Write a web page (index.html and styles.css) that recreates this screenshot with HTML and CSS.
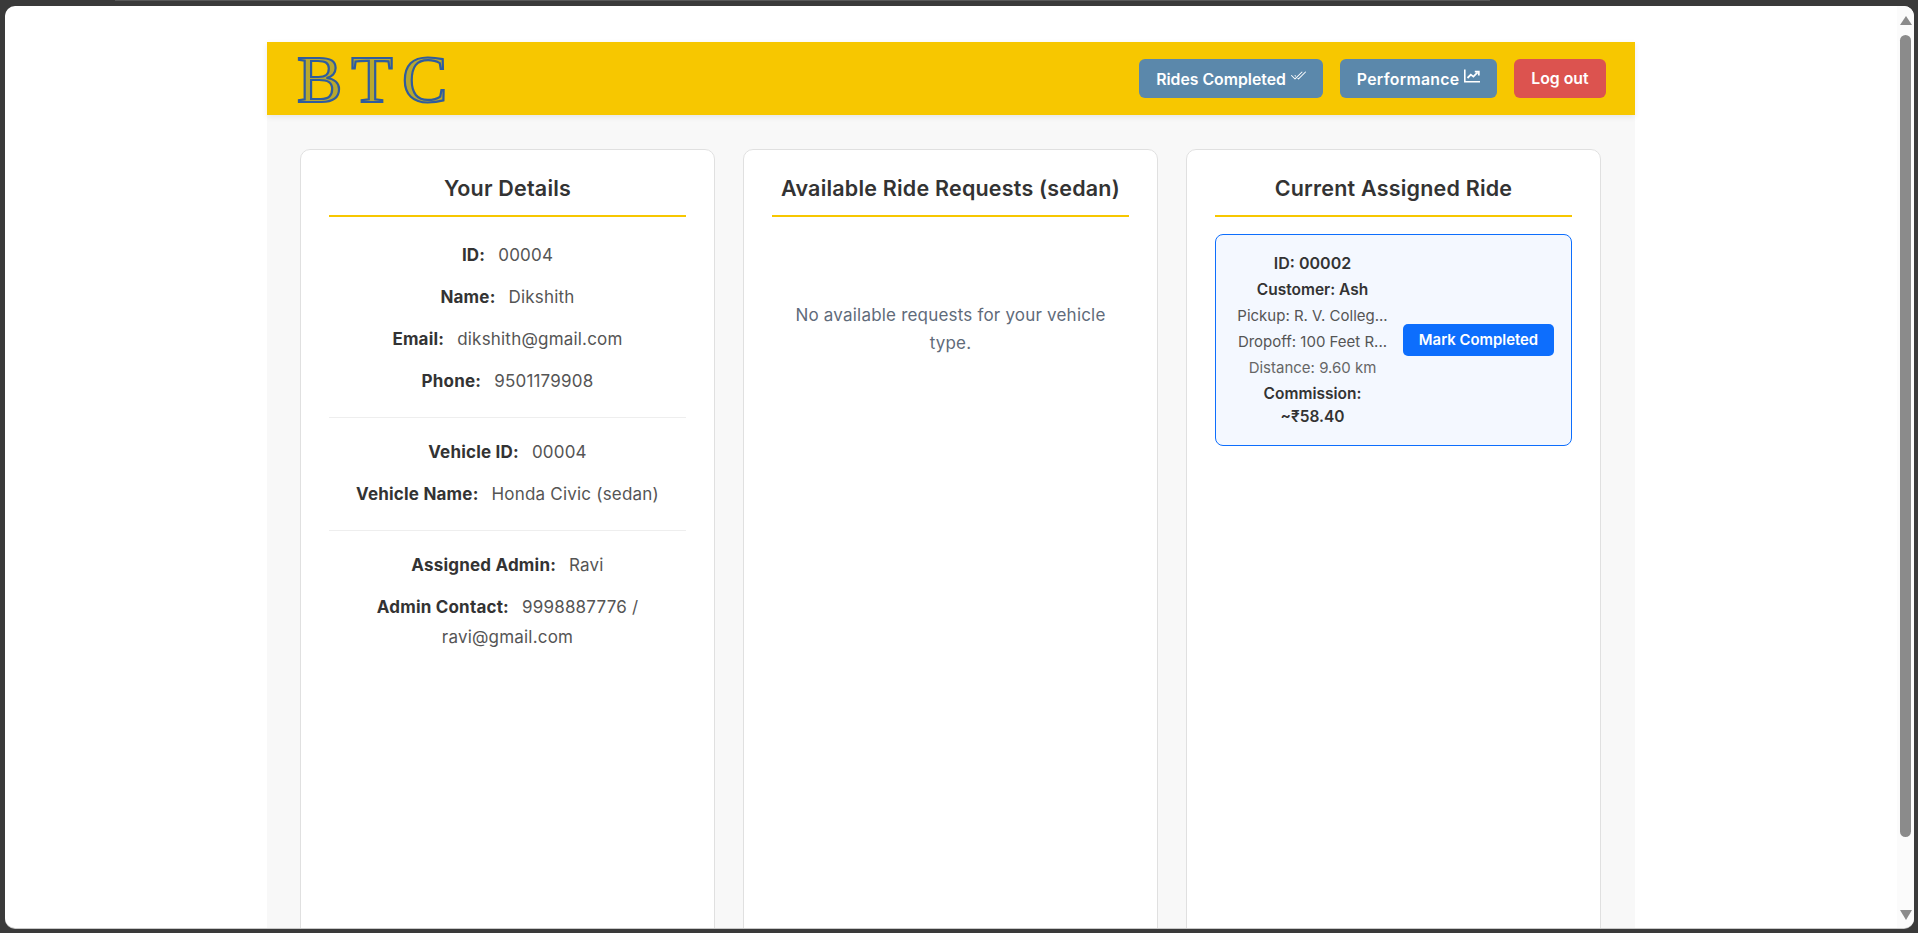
FILE: index.html
```html
<!DOCTYPE html>
<html lang="en">
<head>
    <meta charset="UTF-8">
    <meta name="viewport" content="width=device-width, initial-scale=1.0">
    <title>BTC Driver Dashboard</title>
    <link rel="stylesheet" href="styles.css">
</head>
<body>
    <div class="window">
        <div class="page">
            <div class="container">
                <header class="topbar">
                    <div class="logo">BTC</div>
                    <nav class="topbar-actions">
                        <button class="btn btn-nav">Rides Completed
                            <svg class="btn-icon" viewBox="0 0 16 16" fill="currentColor"><path d="M12.354 4.354a.5.5 0 0 0-.708-.708L5 10.293 1.854 7.146a.5.5 0 1 0-.708.708l3.5 3.5a.5.5 0 0 0 .708 0l7-7zm-4.208 7-.896-.897.707-.707.543.543 6.646-6.647a.5.5 0 0 1 .708.708l-7 7a.5.5 0 0 1-.708 0z"/><path d="m5.354 7.146.896.897-.707.707-.897-.896a.5.5 0 1 1 .708-.708z"/></svg>
                        </button>
                        <button class="btn btn-nav btn-performance">Performance
                            <svg class="btn-icon" viewBox="0 0 16 16" fill="none" stroke="currentColor" stroke-width="1.6"><path d="M.8 1.5V13.7H16"/><path d="M3.5 10 6.8 6.6l2.6 2L13.6 4.4" stroke-width="1.8"/><path d="M10.8 3.6h4v3.8" stroke-width="1.8"/></svg>
                        </button>
                        <button class="btn btn-logout">Log out</button>
                    </nav>
                </header>

                <main class="columns">
                    <section class="card">
                        <h2 class="card-title">Your Details</h2>
                        <div class="detail-group">
                            <p class="detail"><strong>ID:</strong> <span>00004</span></p>
                            <p class="detail"><strong>Name:</strong> <span>Dikshith</span></p>
                            <p class="detail"><strong>Email:</strong> <span>dikshith@gmail.com</span></p>
                            <p class="detail"><strong>Phone:</strong> <span>9501179908</span></p>
                        </div>
                        <div class="detail-group">
                            <p class="detail"><strong>Vehicle ID:</strong> <span>00004</span></p>
                            <p class="detail"><strong>Vehicle Name:</strong> <span>Honda Civic (sedan)</span></p>
                        </div>
                        <div class="detail-group">
                            <p class="detail"><strong>Assigned Admin:</strong> <span>Ravi</span></p>
                            <p class="detail"><strong>Admin Contact:</strong> <span>9998887776 /</span> <span class="detail-wrap">ravi@gmail.com</span></p>
                        </div>
                    </section>

                    <section class="card">
                        <h2 class="card-title">Available Ride Requests (sedan)</h2>
                        <p class="empty">No available requests for your vehicle type.</p>
                    </section>

                    <section class="card">
                        <h2 class="card-title">Current Assigned Ride</h2>
                        <div class="ride">
                            <div class="ride-info">
                                <p class="ride-id">ID: 00002</p>
                                <p class="ride-strong">Customer: Ash</p>
                                <p class="ride-line">Pickup: R. V. Colleg...</p>
                                <p class="ride-line">Dropoff: 100 Feet R...</p>
                                <p class="ride-line ride-muted">Distance: 9.60 km</p>
                                <p class="ride-strong ride-fare">Commission:<br>~₹58.40</p>
                            </div>
                            <button class="btn btn-complete">Mark Completed</button>
                        </div>
                    </section>
                </main>
            </div>
        </div>
        <div class="scrollbar">
            <span class="arrow-up"></span>
            <span class="thumb"></span>
            <span class="arrow-down"></span>
        </div>
    </div>
</body>
</html>
```

FILE: styles.css
```css
* {
    box-sizing: border-box;
}

html, body {
    height: 100%;
}

body {
    margin: 0;
    padding: 6px 4px 5px 5px;
    overflow: hidden;
    background-color: #3a3a3a;
    font-family: Inter, "Liberation Sans", sans-serif;
    font-size: 17px;
    letter-spacing: 0.2px;
    color: #333;
}

/* Thin strip of the desktop behind the window */
body::before {
    content: "";
    position: absolute;
    top: 0;
    left: 115px;
    width: 1375px;
    height: 1px;
    background-color: #585858;
}

/* Browser window */
.window {
    display: flex;
    height: 100%;
    background-color: #fff;
    border-radius: 10px;
    box-shadow: 0 1px 0 #c8c8c8;
    overflow: hidden;
}

.page {
    flex: 1;
    min-width: 0;
    overflow: hidden;
}

.scrollbar {
    width: 17px;
    display: flex;
    flex-direction: column;
    align-items: center;
    padding: 10px 0 8px;
    background-color: #fbfbfb;
}

.thumb {
    flex: 1;
    width: 11px;
    margin: 10px 0 73px;
    border-radius: 6px;
    background-color: #8b8b8b;
}

.arrow-up,
.arrow-down {
    width: 0;
    height: 0;
    border-left: 6.5px solid transparent;
    border-right: 6.5px solid transparent;
}

.arrow-up {
    border-bottom: 9px solid #8b8b8b;
}

.arrow-down {
    border-top: 10px solid #8b8b8b;
}

/* Page */
.container {
    width: 1368px;
    height: 1000px;
    margin: 36px auto 0;
    background-color: #f8f8f8;
}

.topbar {
    height: 73px;
    display: flex;
    align-items: center;
    justify-content: space-between;
    padding: 0 29px 0 30px;
    background-color: #f7c700;
    box-shadow: 0 2px 6px rgba(0, 0, 0, 0.08);
}

.logo {
    font-family: "Liberation Serif", serif;
    font-size: 68px;
    line-height: 1;
    letter-spacing: 9px;
    color: #b8a82e;
    -webkit-text-stroke: 2.2px #2f5c9e;
}

.topbar-actions {
    display: flex;
    gap: 17px;
}

.btn {
    border: none;
    border-radius: 6px;
    color: #fff;
    font-family: inherit;
    font-weight: 600;
    font-size: 15.8px;
    height: 39px;
    padding: 0 17px;
}

.btn-nav {
    background-color: #5b88ab;
}

.btn-performance {
    letter-spacing: 0.3px;
}

.btn-logout {
    padding: 0 17.5px;
    background-color: #dc534f;
}

.btn-icon {
    width: 16px;
    height: 16px;
    vertical-align: 1px;
}

/* Columns */
.columns {
    display: grid;
    grid-template-columns: repeat(3, 415px);
    gap: 28px;
    padding: 34px 33px 0;
}

.card {
    height: 900px;
    padding: 23px 28px;
    background-color: #fff;
    border: 1px solid #e0e0e0;
    border-radius: 10px;
}

.card-title {
    margin: 0 0 17px;
    padding-bottom: 12px;
    border-bottom: 2px solid #f7c700;
    font-size: 21.5px;
    font-weight: 600;
    line-height: 30px;
    text-align: center;
}

.detail-group {
    padding-bottom: 9px;
    margin-bottom: 19px;
    border-bottom: 1px solid #eee;
}

.card-title + .detail-group {
    padding-top: 6px;
}

.detail-group:last-child {
    border-bottom: none;
}

.detail {
    margin: 0 0 12px;
    line-height: 30px;
    text-align: center;
    color: #555;
}

.detail strong {
    margin-right: 8px;
    font-weight: 700;
    color: #333;
}

.detail-wrap {
    display: block;
}

.empty {
    margin: 84px 18px 0;
    line-height: 28px;
    text-align: center;
    color: #5f6b7a;
}

/* Assigned ride */
.ride {
    display: flex;
    align-items: center;
    gap: 12px;
    padding: 17px 17px 17px 18px;
    background-color: #f4f8ff;
    border: 1px solid #0d6efd;
    border-radius: 8px;
}

.ride-info {
    flex: 1;
    min-width: 0;
    text-align: center;
    letter-spacing: 0;
}

.ride-info p {
    margin: 0 0 3px;
    line-height: 23px;
    font-size: 15px;
}

.ride-info .ride-id {
    font-size: 16px;
    font-weight: 600;
}

.ride-info .ride-strong {
    font-size: 15.5px;
    font-weight: 600;
}

.ride-info .ride-fare {
    margin-bottom: 0;
}

.ride-line {
    color: #555;
    white-space: nowrap;
}

.ride-muted {
    color: #666;
}

.btn-complete {
    flex: none;
    width: 151px;
    height: 32px;
    padding: 0;
    border-radius: 5px;
    background-color: #0d6efd;
    font-size: 14.9px;
    letter-spacing: 0;
}
```
